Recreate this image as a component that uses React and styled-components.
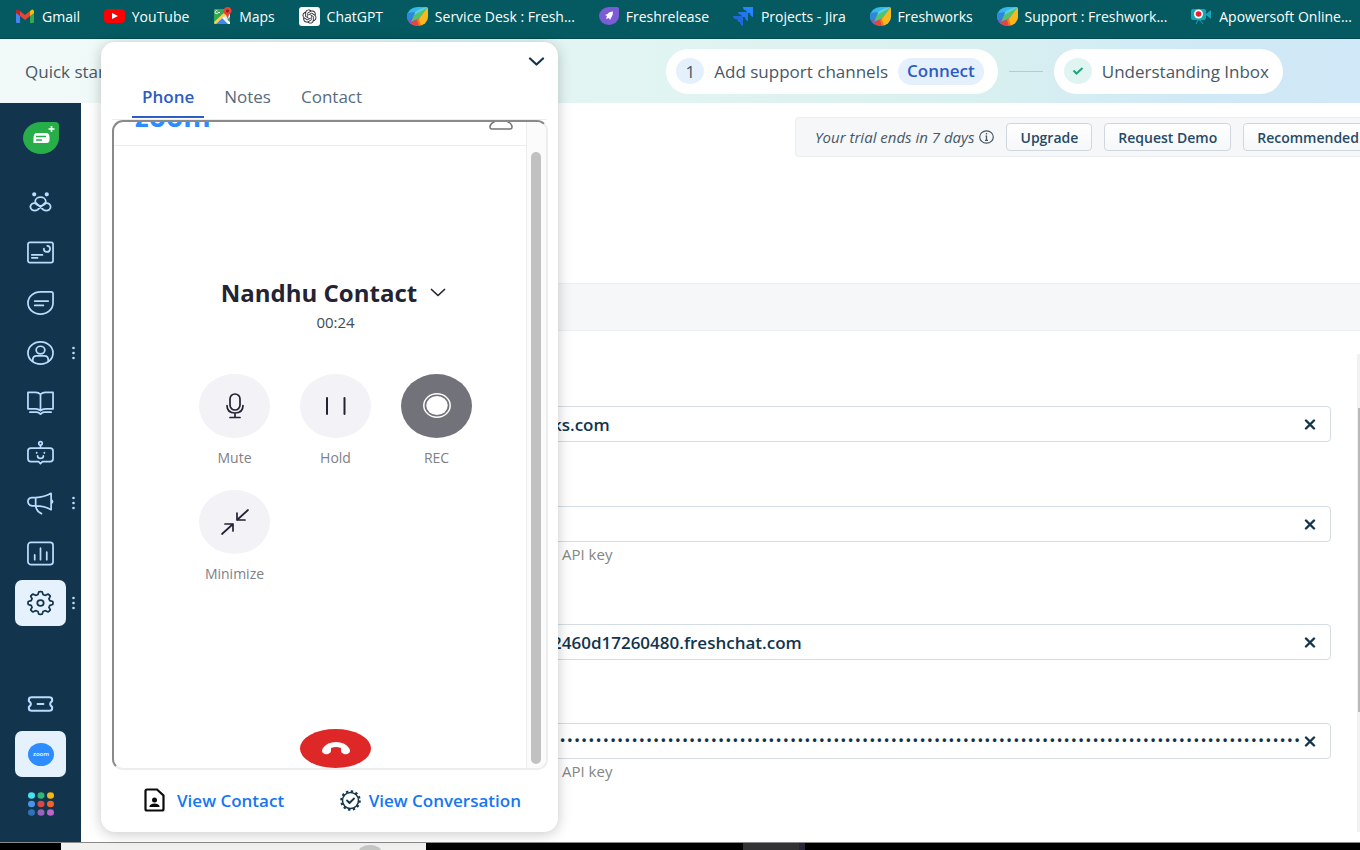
import React, { useState } from 'react'
import styled, { createGlobalStyle } from 'styled-components'
import { RiOpenaiFill } from 'react-icons/ri'

const GlobalStyle = createGlobalStyle`
    * {
        box-sizing: border-box;
    }
    body {
        margin: 0;
        background: #ffffff;
        color: #12344d;
        font-family: "Open Sans", "Noto Sans", sans-serif;
        font-size: 14px;
    }
    button, input {
        font: inherit;
        color: inherit;
        margin: 0;
        padding: 0;
        border: 0;
        background: none;
    }
    a {
        color: inherit;
        text-decoration: none;
    }
    svg {
        display: block;
        flex: none;
    }
`

const Page = styled.div`
    position: relative;
    display: flex;
    flex-direction: column;
    min-height: 100vh;
    overflow: hidden;
`

const BookmarkBar = styled.nav`
    display: flex;
    align-items: center;
    justify-content: space-between;
    height: 39px;
    padding: 0 8px 6px 15px;
    background: #045a60;
    border-bottom: 1px solid #024a50;
    color: #ffffff;
    white-space: nowrap;
`

const Bookmark = styled.a`
    display: flex;
    align-items: center;
    gap: 7px;
`

const QuickStart = styled.header`
    display: flex;
    align-items: center;
    justify-content: space-between;
    height: 64px;
    padding: 0 77px 0 25px;
    background: linear-gradient(90deg, #f2faf9 0%, #e0f4f1 50%, #d9f0f0 72%, #d0e9f6 88%, #d0e8f7 100%);
    color: #475867;
    font-size: 17px;
    white-space: nowrap;
`

const Steps = styled.div`
    display: flex;
    align-items: center;
    gap: 11px;
`

const Step = styled.div`
    display: flex;
    align-items: center;
    gap: 10px;
    height: 45px;
    padding: 0 14px 0 10px;
    border-radius: 23px;
    background: #ffffff;
`

const StepBadge = styled.span`
    display: flex;
    align-items: center;
    justify-content: center;
    width: 28px;
    height: 26px;
    border-radius: 50%;
    background: ${p => p.done ? '#e0f5f1' : '#e5f0fd'};
`

const ConnectButton = styled.button`
    height: 27px;
    padding: 0 9px;
    border-radius: 14px;
    background: #e5f0fd;
    color: #2c5cc5;
    font-weight: 600;
    line-height: 24px;
`

const StepLine = styled.span`
    width: 34px;
    height: 1px;
    background: #a9cbee;
`

const Body = styled.div`
    display: flex;
    flex: 1;
`

const Sidebar = styled.nav`
    display: flex;
    flex-direction: column;
    align-items: center;
    flex: none;
    width: 81px;
    padding: 12px 0 15px;
    background: #12344d;
    color: #bbdcfe;
`

const NavGroup = styled.div`
    display: flex;
    flex-direction: column;
    gap: 4px;
    margin-top: ${p => p.bottom ? 'auto' : '19px'};
`

const NavItem = styled.button`
    position: relative;
    display: flex;
    align-items: center;
    justify-content: center;
    width: 51px;
    height: 46px;
    border-radius: 7px;
    background: ${p => p.active ? '#e5f2fd' : 'transparent'};
    color: ${p => p.active ? '#12344d' : '#bbdcfe'};
`

const MoreDots = styled.svg`
    position: absolute;
    right: -9px;
    top: 16px;
`

const Main = styled.main`
    display: flex;
    flex-direction: column;
    flex: 1;
    min-width: 0;
    padding-top: 14px;
`

const TrialBar = styled.div`
    display: flex;
    align-items: center;
    align-self: flex-end;
    gap: 12px;
    width: 565px;
    height: 40px;
    padding-left: 19px;
    overflow: hidden;
    border: 1px solid #ebeef0;
    border-right: 0;
    border-radius: 4px 0 0 4px;
    background: #f5f7f9;
    white-space: nowrap;
`

const TrialText = styled.span`
    display: flex;
    align-items: center;
    gap: 5px;
    color: #475867;
    font-size: 15px;
    font-style: italic;
`

const TrialButton = styled.button`
    flex: none;
    height: 28px;
    padding: 0 13px;
    border: 1px solid #cfd7df;
    border-radius: 4px;
    background: linear-gradient(#ffffff, #f5f7f9);
    color: #264966;
    font-weight: 600;
`

const SectionBand = styled.div`
    height: 48px;
    margin: 126px 0 23px 60px;
    border: solid #ebeff3;
    border-width: 1px 0;
    background: #f5f7f9;
`

const Settings = styled.div`
    display: flex;
    justify-content: space-between;
    flex: 1;
    margin-bottom: 10px;
`

const Form = styled.form`
    display: grid;
    grid-template-rows: 100px 118px 99px auto;
    flex: 1;
    align-content: start;
    padding: 52px 26px 0 459px;
`

const FieldBox = styled.div`
    display: flex;
    align-items: center;
    height: 36px;
    border: 1px solid #d5dde4;
    border-radius: 4px;
`

const FieldInput = styled.input`
    flex: 1;
    min-width: 0;
    height: 34px;
    padding-left: ${p => p.type === 'password' ? '18px' : '11px'};
    outline: 0;
    color: #12344d;
    font-family: ${p => p.type === 'password' ? '"Liberation Mono", monospace' : 'inherit'};
    font-size: ${p => p.type === 'password' ? '12px' : '17px'};
    font-weight: ${p => p.type === 'password' ? 700 : 600};
`

const ClearButton = styled.button`
    display: flex;
    align-items: center;
    justify-content: center;
    width: 20px;
    height: 34px;
    margin-right: 10px;
`

const Hint = styled.p`
    margin: 2px 0 0 22px;
    color: #858585;
    font-size: 15px;
    line-height: 20px;
`

const PageScroll = styled.div`
    width: 3px;
    padding-top: 54px;
    background: #f1f1f1;
`

const PageScrollThumb = styled.div`
    width: 2px;
    height: 304px;
    margin-left: auto;
    background: #b9b9b9;
`

const Taskbar = styled.footer`
    display: flex;
    height: 8px;
    overflow: hidden;
    border-top: 1px solid #8a8a8a;
    background: #000000;
`

const TaskbarSearch = styled.div`
    width: 365px;
    margin: 0 317px 0 61px;
    padding: 2px 0 0 296px;
    background: #f1f1f0;
`

const TaskbarWindow = styled.div`
    width: 56px;
    background: #333335;
`

const TaskbarEdge = styled.div`
    width: 6px;
    background: #26263a;
`

const Widget = styled.section`
    position: absolute;
    top: 42px;
    bottom: 18px;
    left: 101px;
    display: flex;
    flex-direction: column;
    width: 457px;
    border-radius: 14px;
    background: #ffffff;
    box-shadow: 0 2px 14px rgba(0, 0, 0, 0.22);
`

const WidgetTop = styled.div`
    display: flex;
    align-items: center;
    justify-content: flex-end;
    height: 40px;
    padding-right: 13px;
`

const Tabs = styled.div`
    display: flex;
    gap: 10px;
    height: 38px;
    margin: 0 11px;
    padding-left: 20px;
    border-bottom: 1px solid #ebeef0;
`

const Tab = styled.button`
    height: 36px;
    padding: 0 10px 6px;
    border-bottom: 2px solid ${p => p.active ? '#2c5cc5' : 'transparent'};
    color: ${p => p.active ? '#2c5cc5' : '#576c7d'};
    font-size: 17px;
    font-weight: ${p => p.active ? 600 : 400};
`

const PhoneFrame = styled.div`
    display: flex;
    flex: 1;
    margin: 0 10px 0 11px;
    overflow: hidden;
    border: 2px solid;
    border-color: #8a8a8a #ededed #ededed #8a8a8a;
    border-radius: 11px;
`

const PhoneContent = styled.div`
    display: flex;
    flex-direction: column;
    flex: 1;
`

const PhoneHeader = styled.div`
    display: flex;
    align-items: flex-end;
    justify-content: space-between;
    height: 24px;
    padding: 0 13px 15px 21px;
    overflow: hidden;
    border-bottom: 1px solid #ededed;
`

const ZoomWord = styled.span`
    color: #2d8cff;
    font-size: 28px;
    font-weight: 700;
    line-height: 28px;
`

const Call = styled.div`
    display: flex;
    flex-direction: column;
    align-items: center;
    flex: 1;
    padding: 130px 0 0 31px;
`

const Caller = styled.h1`
    display: flex;
    align-items: center;
    gap: 13px;
    margin: 0;
    padding-right: 4px;
    color: #232333;
    font-size: 24px;
    font-weight: 700;
    line-height: 34px;
`

const CallTime = styled.time`
    margin-top: 2px;
    color: #444b53;
    font-size: 15px;
    line-height: 20px;
`

const CallActions = styled.div`
    display: grid;
    grid-template-columns: repeat(3, 101px);
    gap: 22px 0;
    margin: 42px 0 auto;
`

const Action = styled.button`
    display: flex;
    flex-direction: column;
    align-items: center;
    gap: 10px;
    color: #808088;
    line-height: 20px;
`

const ActionCircle = styled.span`
    display: flex;
    align-items: center;
    justify-content: center;
    width: 71px;
    height: 64px;
    border-radius: 50%;
    background: ${p => p.dark ? '#72727a' : '#f2f2f7'};
`

const EndCall = styled.button`
    display: flex;
    align-items: center;
    justify-content: center;
    width: 71px;
    height: 39px;
    border-radius: 50%;
    background: #de2828;
`

const PhoneScroll = styled.div`
    width: 20px;
    padding: 30px 4px 4px;
    border-left: 1px solid #ededed;
    background: #fbfbfb;
`

const PhoneScrollThumb = styled.div`
    width: 10px;
    height: 100%;
    border-radius: 5px;
    background: #c1c1c1;
`

const WidgetFooter = styled.div`
    display: flex;
    align-items: center;
    justify-content: space-between;
    height: 62px;
    padding: 0 37px 2px 43px;
    color: #1677f2;
    font-size: 17px;
    font-weight: 600;
`

const FooterLink = styled.a`
    display: flex;
    align-items: center;
    gap: ${p => p.gap}px;
`

const GmailIcon = () => (
    <svg width="20" height="16" viewBox="0 0 20 16">
        <path d="M1 3v11q0 1 1 1h3V6z" fill="#4285f4" />
        <path d="M15 6v9h3q1 0 1-1V3z" fill="#34a853" />
        <path d="M15 3v5l4-3V3q-1-3-4 0z" fill="#fbbc04" />
        <path d="M5 3v5L1 5V3q1-3 4 0z" fill="#c5221f" />
        <path d="M5 3l5 4 5-4v5l-5 4-5-4z" fill="#ea4335" />
    </svg>
)

const YouTubeIcon = () => (
    <svg width="21" height="14" viewBox="0 0 21 14">
        <rect width="21" height="14" rx="4" fill="#ff0000" />
        <path d="M8 4l6 3-6 3z" fill="#ffffff" />
    </svg>
)

const MapsIcon = () => (
    <svg width="19" height="18" viewBox="0 0 19 18">
        <rect x="1" y="2" width="16" height="15" rx="1" fill="#34a853" />
        <path d="M1 16L15 3l2 1v6L10 17H2z" fill="#dfe3e8" />
        <path d="M9 10l8 7H2z" fill="#4285f4" />
        <path d="M1 15L13 4l2 2L3 17z" fill="#fbd04b" />
        <path d="M11 10l6 5v2h-2l-6-6z" fill="#f1f3f4" />
        <path d="M14.500 12Q14 8 10.500 6Q10 0 14.500 0Q19 0 18.500 5Q15 8 14.500 12z" fill="#ea4335" />
        <circle cx="14.500" cy="4" r="1.500" fill="#8c1d18" />
        <path d="M7 5.500H5a1.500 1.500 0 1 1-.5-1.500" stroke="#ffffff" fill="none" />
    </svg>
)

const GptBox = styled.span`
    display: flex;
    align-items: center;
    justify-content: center;
    width: 21px;
    height: 19px;
    border-radius: 3px;
    background: #ffffff;
    color: #2d2f38;
`

const FreshworksIcon = () => (
    <svg width="21" height="19" viewBox="0 0 21 19">
        <clipPath id="leaf"><path d="M10.500 0H19q2 0 2 2v7.500a10.500 9.500 0 1 1-10.500-9.500z" /></clipPath>
        <g clipPath="url(#leaf)">
            <rect width="21" height="19" fill="#35b9ea" />
            <path d="M0 6l8-1 4-2L6 13l-6 3z" fill="#2f86dc" />
            <path d="M8 5Q13 1 21 0L7 10z" fill="#5cd2e8" />
            <path d="M0 14l6-3 3 1-3 7H0z" fill="#8a55c4" />
            <path d="M4 16l8-5 1 8H5z" fill="#e5443f" />
            <path d="M10 13l4-4 2 10h-4z" fill="#f47a28" />
            <path d="M20 1l-8 11 2 7h7V0z" fill="#fcb818" />
            <path d="M20 1L7 8l-3 7 8-4z" fill="#52c469" />
        </g>
    </svg>
)

const FreshreleaseIcon = () => (
    <svg width="20" height="18" viewBox="0 0 20 18">
        <path d="M10 0h8q2 0 2 2v7a10 9 0 1 1-10-9z" fill="#7b5bd6" />
        <path d="M14 4.500q-4 0-5.500 2.500L6 8l2 1-1 3 3-1 1 2L12.500 10q1.500-2 1.500-5.500z" fill="#ffffff" />
    </svg>
)

const JiraIcon = () => (
    <svg width="21" height="19" viewBox="0 0 21 19">
        <path d="M10 0h10v10q-3-1-3-4h-3q0-2-1-2.500Q10 3 10 0z" fill="#2684ff" />
        <path d="M5 5h10v9q-3-1-3-4H9q0-2-1-2Q5 7 5 5z" fill="#2477ea" />
        <path d="M0 9h10v10q-3-1-3-4H5q0-2-1-2.500Q0 12 0 9z" fill="#1f68dc" />
    </svg>
)

const ApowersoftIcon = () => (
    <svg width="21" height="18" viewBox="0 0 21 18">
        <rect y="2" width="15" height="11" rx="2" fill="#16a5b8" />
        <path d="M15 7l5-4v9l-5-4z" fill="#16a5b8" />
        <path d="M5 17l2-4h2l3 4" stroke="#16a5b8" fill="none" />
        <circle cx="7.500" cy="7" r="4.500" fill="#ffffff" />
        <circle cx="7.500" cy="7" r="2.800" fill="#e8202a" />
    </svg>
)

const bookmarks = [
    ['Gmail', <GmailIcon />],
    ['YouTube', <YouTubeIcon />],
    ['Maps', <MapsIcon />],
    ['ChatGPT', <GptBox><RiOpenaiFill size={17} /></GptBox>],
    ['Service Desk : Fresh...', <FreshworksIcon />],
    ['Freshrelease', <FreshreleaseIcon />],
    ['Projects - Jira', <JiraIcon />],
    ['Freshworks', <FreshworksIcon />],
    ['Support : Freshwork...', <FreshworksIcon />],
    ['Apowersoft Online...', <ApowersoftIcon />],
]

// Line icons of the sidebar all share one 28x26 box.
const Line = ({ children }) => (
    <svg width="27" height="26" viewBox="0 0 28 26" fill="none" stroke="currentColor"
        strokeWidth="1.800" strokeLinecap="round" strokeLinejoin="round">
        {children}
    </svg>
)

// Eight rounded teeth around the centre of the icon box.
const gearPoints = Array.from({ length: 96 }, (_, i) => {
    const angle = i / 96 * Math.PI * 2
    const wave = Math.max(-1, Math.min(1, 1.8 * Math.cos(8 * angle)))
    const r = 10.8 + 1.4 * wave
    return `${(14 + r * 1.06 * Math.cos(angle)).toFixed(2)},${(13 + r * 0.96 * Math.sin(angle)).toFixed(2)}`
}).join(' ')

const navItems = [
    {
        name: 'Freddy', icon: <Line>
            <circle cx="7.500" cy="4" r="1.300" fill="currentColor" />
            <circle cx="20.500" cy="4" r="1.300" fill="currentColor" />
            <ellipse cx="14" cy="11.500" rx="5.500" ry="4.500" />
            <path d="M9 12.500l8 7.500q3 2 6 0 3-3 0-6-2-1.500-4-.5M19 12.500L11 20q-3 2-6 0-3-3 0-6 2-1.500 4-.5" />
        </Line>
    },
    {
        name: 'Dashboard', icon: <Line>
            <rect x="1" y="2" width="26" height="21" rx="2" />
            <path d="M5 15h11M5 18h6M17.500 8.500a3.200 3.200 0 1 0 3.500-3" />
        </Line>
    },
    {
        name: 'Inbox', icon: <Line>
            <path d="M14 1.500h11q2 0 2 2V13a13 11.500 0 1 1-13-11.500zM8 11h14M8 15.500h9" />
        </Line>
    },
    {
        name: 'Contacts', more: true, icon: <Line>
            <ellipse cx="14" cy="13" rx="13" ry="11.500" />
            <ellipse cx="14" cy="10" rx="4.500" ry="4" />
            <path d="M6 21v-1q0-4 4-4h8q4 0 4 4v1" />
        </Line>
    },
    {
        name: 'Knowledge base', icon: <Line>
            <path d="M14 4q-2-2-5-2H1v17h8q3 0 5 2 2-2 5-2h8V2h-8q-3 0-5 2zM14 4v16M3 22.500h7q2 0 4 2 2-2 4-2h7" />
        </Line>
    },
    {
        name: 'Bots', icon: <Line>
            <circle cx="14" cy="3" r="1.800" />
            <path d="M14 5v3M4 8h20q3 0 3 3v8q0 3-3 3h-8l-2 2-2-2H4q-3 0-3-3v-8q0-3 3-3zM10 12.500v.5M18 12.500v.5M11 16q0 2.500 3 2.500t3-2.500" />
        </Line>
    },
    {
        name: 'Campaigns', more: true, icon: <Line>
            <path d="M9 7.500Q18 7 25 3v17q-7-4-16-4H5q-4-1-4-4.500T5 7.500zM9 7.500V16M25 9.500q3 2 0 4M9 16q1 6 6 8" />
        </Line>
    },
    {
        name: 'Reports', icon: <Line>
            <rect x="1" y="2" width="26" height="23" rx="3" />
            <path d="M8 15v5M14 8v12M20.500 12v8" />
        </Line>
    },
    {
        name: 'Settings', more: true, active: true, icon: <Line>
            <polygon points={gearPoints} />
            <ellipse cx="14" cy="13" rx="3.300" ry="3" />
        </Line>
    },
]

const TicketIcon = () => (
    <Line>
        <path d="M5 6h18q3 0 3 2v2q-4 3 0 6v2q0 2-3 2H5q-3 0-3-2v-2q4-3 0-6V8q0-2 3-2zM11 13h6" strokeWidth="2.200" />
    </Line>
)

const ZoomIcon = () => (
    <svg width="26" height="23" viewBox="0 0 26 23">
        <ellipse cx="13" cy="11.500" rx="13" ry="11.500" fill="#2d8cff" />
        <text x="13" y="13" fill="#ffffff" fontSize="6" fontWeight="600" textAnchor="middle">zoom</text>
    </svg>
)

const dotColors = ['#4be0ee', '#2eb872', '#fcb414', '#4a93e8', '#d84848', '#f2622a', '#2f73b5', '#9a63b8', '#bb66c8']

const AppsIcon = () => (
    <svg width="26" height="24" viewBox="0 0 26 24">
        {dotColors.map((c, i) => (
            <ellipse key={c} cx={3.5 + (i % 3) * 9.5} cy={3.5 + Math.floor(i / 3) * 8.5} rx="3.500" ry="3.200" fill={c} />
        ))}
    </svg>
)

const ChatLogo = () => (
    <svg width="36" height="32" viewBox="0 0 36 32">
        <path d="M18 0h14.500Q36 0 36 3.500V16a18 16 0 1 1-18-16z" fill="#27ae48" />
        <path d="M14 11h9q3.500 0 3.500 4v3q0 3-3 3H10.500v-5q0-5 3.500-5z" fill="#ffffff" />
        <path d="M13 14.500h10M13 18h6" stroke="#27ae48" strokeWidth="1.300" />
        <path d="M28.500 4v6M25.500 7h6" stroke="#ffffff" strokeWidth="1.600" />
    </svg>
)

const Chevron = ({ width, height, stroke }) => (
    <svg width={width} height={height} viewBox="0 0 16 10" fill="none" stroke="currentColor"
        strokeWidth={stroke} strokeLinecap="round" strokeLinejoin="round">
        <path d="M1.500 1.500l6.500 6 6.500-6" />
    </svg>
)

const ActionIcon = ({ children }) => (
    <svg width="32" height="28" viewBox="0 0 32 28" fill="none" stroke="#232333"
        strokeWidth="1.700" strokeLinecap="round" strokeLinejoin="round">
        {children}
    </svg>
)

const actions = [
    {
        name: 'Mute', icon: <ActionIcon>
            <rect x="11" y="2" width="10" height="16" rx="5" />
            <path d="M8 13.500q0 7.500 8 7.500t8-7.500M16 21.500v4M11 25.500h10" />
        </ActionIcon>
    },
    { name: 'Hold', icon: <ActionIcon><path d="M7 6v16M24.500 6v16" strokeWidth="2" /></ActionIcon> },
    {
        name: 'REC', dark: true, icon: <ActionIcon>
            <ellipse cx="16" cy="13.500" rx="13.200" ry="11.700" stroke="#ffffff" strokeWidth="1.500" />
            <ellipse cx="16" cy="13.500" rx="10.700" ry="9.500" fill="#ffffff" stroke="none" />
        </ActionIcon>
    },
    {
        name: 'Minimize', icon: <ActionIcon>
            <path d="M29 2L18 12M18 5v7h8M3 26l11-10M6 16h8v7" />
        </ActionIcon>
    },
]

const tabs = ['Phone', 'Notes', 'Contact']

const fields = [
    { id: 'domain', label: 'Account domain', value: 'ks.com' },
    { id: 'key', label: 'API key', value: '', hint: true },
    { id: 'chat-url', label: 'Chat URL', value: '2460d17260480.freshchat.com' },
    { id: 'chat-key', label: 'Chat API key', value: 'x'.repeat(103), hint: true, type: 'password' },
]

function Field({ field }) {
    const [value, setValue] = useState(field.value)
    return (
        <div>
            <FieldBox>
                <FieldInput
                    id={field.id}
                    type={field.type || 'text'}
                    aria-label={field.label}
                    autoComplete="off"
                    value={value}
                    onChange={e => setValue(e.target.value)}
                />
                <ClearButton type="button" aria-label={'Clear ' + field.label} onClick={() => setValue('')}>
                    <svg width="12" height="11" viewBox="0 0 12 11">
                        <path d="M2 1.500l8 8M10 1.500l-8 8" stroke="#12344d" strokeWidth="2.400" strokeLinecap="round" />
                    </svg>
                </ClearButton>
            </FieldBox>
            {field.hint ? <Hint>API key</Hint> : null}
        </div>
    )
}

function PhoneWidget() {
    const [active, setActive] = useState('Phone')
    return (
        <Widget>
            <WidgetTop>
                <button aria-label="Collapse">
                    <Chevron width="17" height="10" stroke="2.200" />
                </button>
            </WidgetTop>
            <Tabs>
                {tabs.map(t => (
                    <Tab key={t} active={t === active ? 1 : 0} onClick={() => setActive(t)}>{t}</Tab>
                ))}
            </Tabs>
            <PhoneFrame>
                <PhoneContent>
                    <PhoneHeader>
                        <ZoomWord>zoom</ZoomWord>
                        <svg width="24" height="20" viewBox="0 0 24 20" fill="none" stroke="#747474" strokeWidth="1.500">
                            <ellipse cx="12" cy="3" rx="5" ry="4" />
                            <path d="M1 16q2-5.500 11-5.500T23 16v1q0 2-2 2H3q-2 0-2-2z" />
                        </svg>
                    </PhoneHeader>
                    <Call>
                        <Caller>
                            Nandhu Contact
                            <Chevron width="16" height="10" stroke="1.700" />
                        </Caller>
                        <CallTime>00:24</CallTime>
                        <CallActions>
                            {actions.map(a => (
                                <Action key={a.name}>
                                    <ActionCircle dark={a.dark ? 1 : 0}>{a.icon}</ActionCircle>
                                    {a.name}
                                </Action>
                            ))}
                        </CallActions>
                        <EndCall aria-label="End call">
                            <svg width="28" height="13" viewBox="0 0 28 13">
                                <path d="M14 0Q23 0 27 6q2 3 0 5-2 2-5 1-3-1-3-3V6q-5-2-10 0v3q0 2-3 3-3 1-5-1-2-2 0-5 4-6 13-6z" fill="#ffffff" />
                            </svg>
                        </EndCall>
                    </Call>
                </PhoneContent>
                <PhoneScroll><PhoneScrollThumb /></PhoneScroll>
            </PhoneFrame>
            <WidgetFooter>
                <FooterLink href="#contact" gap={12}>
                    <svg width="21" height="24" viewBox="0 0 21 24">
                        <path d="M3 1.500h10l6.500 6V21q0 1.500-1.500 1.500H3q-1.500 0-1.500-1.500V3q0-1.500 1.500-1.500z" fill="none" stroke="#0a0a0a" strokeWidth="2.200" />
                        <circle cx="10.500" cy="12" r="2.500" fill="#0a0a0a" />
                        <path d="M5.500 19v-1q1-2.500 5-2.500t5 2.500v1z" fill="#0a0a0a" />
                    </svg>
                    View Contact
                </FooterLink>
                <FooterLink href="#conversation" gap={7}>
                    <svg width="23" height="21" viewBox="0 0 23 21" fill="none" stroke="#12344d" strokeLinecap="round" strokeLinejoin="round">
                        <circle cx="11.500" cy="10.500" r="9.300" strokeWidth="2" strokeDasharray="2.400 2.470" strokeLinecap="butt" />
                        <circle cx="11.500" cy="10.500" r="8" strokeWidth="1.500" />
                        <path d="M8 10.500l2.500 2.500L15 8.500" strokeWidth="1.800" />
                    </svg>
                    View Conversation
                </FooterLink>
            </WidgetFooter>
        </Widget>
    )
}

function App() {
    return (
        <Page>
            <GlobalStyle />
            <BookmarkBar>
                {bookmarks.map(([name, icon]) => (
                    <Bookmark key={name} href="#bookmark">{icon}{name}</Bookmark>
                ))}
            </BookmarkBar>
            <QuickStart>
                <span>Quick start</span>
                <Steps>
                    <Step>
                        <StepBadge>1</StepBadge>
                        Add support channels
                        <ConnectButton>Connect</ConnectButton>
                    </Step>
                    <StepLine />
                    <Step>
                        <StepBadge done={1}>
                            <svg width="12" height="10" viewBox="0 0 12 10" fill="none">
                                <path d="M1.500 4.500l3 3L10.500 2" stroke="#22a579" strokeWidth="2" />
                            </svg>
                        </StepBadge>
                        Understanding Inbox
                    </Step>
                </Steps>
            </QuickStart>
            <Body>
                <Sidebar>
                    <NavItem aria-label="Home"><ChatLogo /></NavItem>
                    <NavGroup>
                        {navItems.map(n => (
                            <NavItem key={n.name} aria-label={n.name} active={n.active ? 1 : 0}>
                                {n.icon}
                                {n.more
                                    ?
                                    <MoreDots width="3" height="14" viewBox="0 0 3 14" fill="#bbdcfe">
                                        <circle cx="1.500" cy="2" r="1.300" />
                                        <circle cx="1.500" cy="7" r="1.300" />
                                        <circle cx="1.500" cy="12" r="1.300" />
                                    </MoreDots>
                                    :
                                    null
                                }
                            </NavItem>
                        ))}
                    </NavGroup>
                    <NavGroup bottom={1}>
                        <NavItem aria-label="Tickets"><TicketIcon /></NavItem>
                        <NavItem aria-label="Phone" active={1}><ZoomIcon /></NavItem>
                        <NavItem aria-label="Apps"><AppsIcon /></NavItem>
                    </NavGroup>
                </Sidebar>
                <Main>
                    <TrialBar>
                        <TrialText>
                            Your trial ends in 7 days
                            <svg width="15" height="14" viewBox="0 0 15 14" fill="none" stroke="#475867">
                                <ellipse cx="7.500" cy="7" rx="6.800" ry="6.200" strokeWidth="1.200" />
                                <path d="M7.500 3v1.500M6.500 6.200h1v4M6 10.300h3" strokeWidth="1.300" />
                            </svg>
                        </TrialText>
                        <TrialButton>Upgrade</TrialButton>
                        <TrialButton>Request Demo</TrialButton>
                        <TrialButton>Recommended</TrialButton>
                    </TrialBar>
                    <SectionBand />
                    <Settings>
                        <Form>
                            {fields.map(f => <Field key={f.id} field={f} />)}
                        </Form>
                        <PageScroll><PageScrollThumb /></PageScroll>
                    </Settings>
                </Main>
            </Body>
            <Taskbar>
                <TaskbarSearch>
                    <svg width="26" height="16" viewBox="0 0 26 16">
                        <ellipse cx="13" cy="8" rx="12" ry="8" fill="#c4c6c4" />
                    </svg>
                </TaskbarSearch>
                <TaskbarWindow />
                <TaskbarEdge />
            </Taskbar>
            <PhoneWidget />
        </Page>
    )
}

export default App
